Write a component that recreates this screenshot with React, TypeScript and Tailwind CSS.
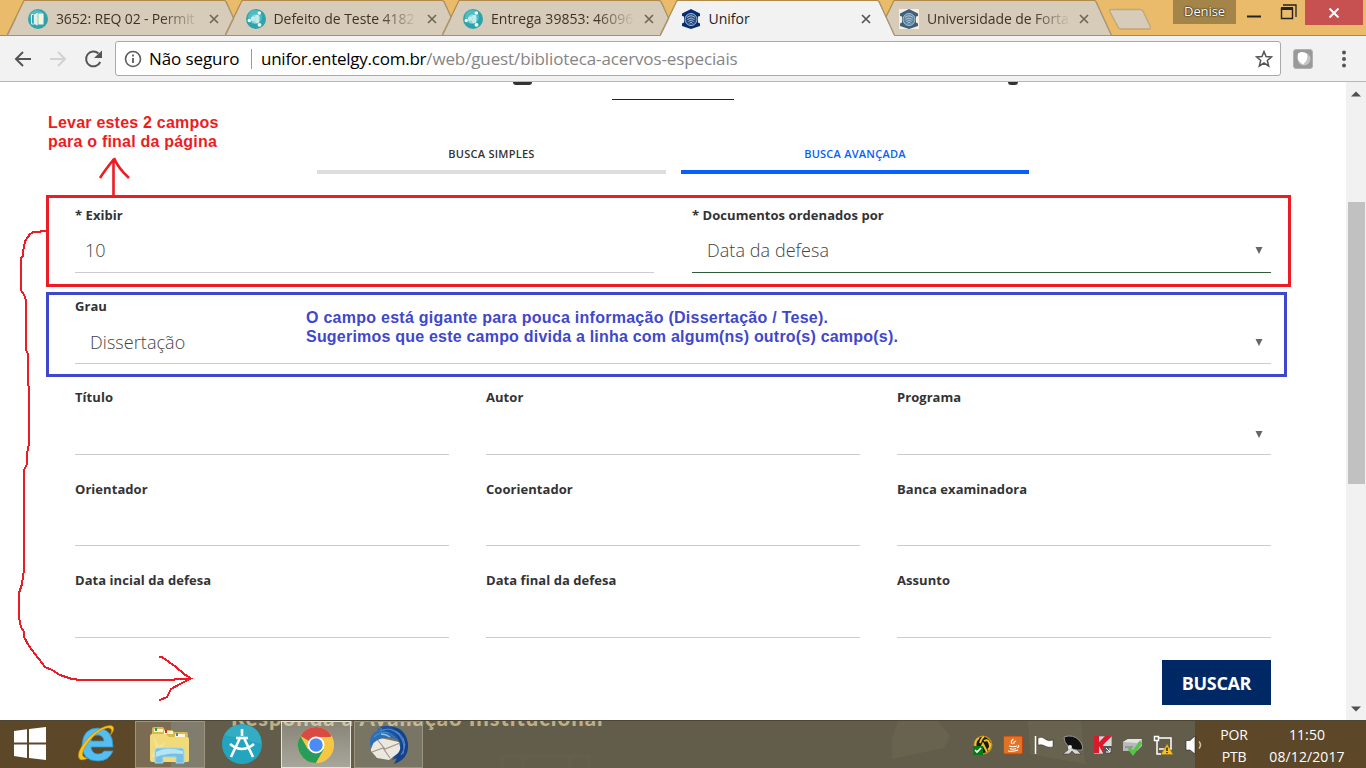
import React from "react";

const ui = "font-['Open_Sans','Noto_Sans',sans-serif]";

function SphereIcon({ door = false }: { door?: boolean }) {
  return (
    <svg width="20" height="20" viewBox="0 0 20 20" className="shrink-0">
      <circle cx="10" cy="10" r="10" fill="#2fa3ad" />
      <circle cx="9" cy="8" r="7" fill="#4dbcc3" />
      {door ? (
        <>
          <path d="M3.500 5.500H7V15H3.500z" fill="#2fa3ad" stroke="#e9f6f2" strokeWidth="1" />
          <path d="M10 4.500h5.500v11H10z" fill="#f8f5dc" />
          <path d="M5.500 5.500 10 3v14l-4.500-2z" fill="#dff0ea" stroke="#2fa3ad" strokeWidth=".500" />
        </>
      ) : (
        <>
          <circle cx="9.500" cy="10" r="4.600" fill="#8fd6d9" />
          <circle cx="7.200" cy="9.800" r="2.300" fill="#c4ebeb" />
          <circle cx="11.200" cy="12" r="2.200" fill="#c4ebeb" />
          <circle cx="11.200" cy="8" r="2.200" fill="#c4ebeb" />
          <circle cx="13.300" cy="4" r="1.800" fill="#f4fbf8" />
          <circle cx="3.300" cy="11.500" r="1.700" fill="#f4fbf8" />
          <circle cx="13.500" cy="15.800" r="1.900" fill="#f4fbf8" />
        </>
      )}
    </svg>
  );
}

function CrestIcon({ boxed = false }: { boxed?: boolean }) {
  const dark = boxed ? "#3d617c" : "#052f70";
  return (
    <svg width="20" height="20" viewBox="0 0 20 20" className="shrink-0">
      {boxed && <rect width="20" height="20" fill="#f8eedb" />}
      <path d="M10 0 19 4.500V7l-2 .500v6l2 1v2.500L10 20l-9-3v-2.500l2-1v-6L1 7V4.500z" fill={dark} />
      <circle cx="10" cy="10.500" r="6" fill={boxed ? "#5c86a0" : "#284f86"} stroke="#b9c9da" strokeWidth=".900" />
      <path d="M6 8.500q4-3.500 8 0M6.500 10.500q3.500-3 7 0M7.500 12.500q2.500-3 5 0M8.500 14.500q1.500-3 3 0" stroke="#c3d0e0" strokeWidth=".800" fill="none" />
    </svg>
  );
}

type TabProps = { title: string; icon: React.ReactNode; active?: boolean; pad: string; track: string; first?: boolean };

function BrowserTab({ title, icon, active, pad, track, first }: TabProps) {
  return (
    <div className={`relative h-9 w-[235px] shrink-0 ${first ? "" : "-ml-[17.5px]"} ${active ? "z-10" : ""}`}>
      <svg className="absolute inset-0" width="235" height="36" viewBox="0 0 235 36">
        <path d="M0 35.500 16 2.500Q16.500.500 18 .500H217Q218.500.500 219.500 2.500L234.500 35.500" fill={active ? "#f2f2f2" : "#d6ccb9"} stroke="#b18b47" strokeWidth="1.200" />
        <path d="M218.500 1 234.500 35M.500 35.500 9 18" stroke="#a49a88" strokeWidth="1" fill="none" />
        <path d={active ? "M1 35.500H234" : "M0 35.500H235"} stroke={active ? "#f2f2f2" : "#a7916b"} strokeWidth="1.200" />
      </svg>
      <div className={`relative flex h-[37px] items-center ${pad}`}>
        {icon}
        <span className={`ml-2 w-[144px] overflow-hidden whitespace-nowrap text-[14px] leading-5 ${track} ${active ? "text-[#1d1d1d]" : "text-[#3d3425] mask-r-from-[105px] mask-r-to-[144px]"}`}>{title}</span>
        <svg width="10" height="10" viewBox="0 0 10 10" className={`absolute top-[14px] ${active ? "left-[201px]" : "left-[202px]"}`}>
          <path d="M1 1 9 9M9 1 1 9" stroke={active ? "#555" : "#706857"} strokeWidth="1.700" />
        </svg>
      </div>
    </div>
  );
}

function TitleBar() {
  return (
    <div className="flex h-9 border-b border-[#a6884f] bg-[#e9bb6a] pl-[7px]">
      <BrowserTab first title="3652: REQ 02 - Permit" icon={<SphereIcon door />} pad="pl-[21px]" track="tracking-[-0.150px]" />
      <BrowserTab title="Defeito de Teste 4182" icon={<SphereIcon />} pad="pl-[21px]" track="tracking-[-0.050px]" />
      <BrowserTab title="Entrega 39853: 46096" icon={<SphereIcon />} pad="pl-[21px]" track="tracking-[0.050px]" />
      <BrowserTab active title="Unifor" icon={<CrestIcon />} pad="pl-[21px]" track="tracking-[0px]" />
      <BrowserTab title="Universidade de Forta" icon={<CrestIcon boxed />} pad="pl-[22px]" track="tracking-[-0.100px]" />
      <svg width="44" height="22" viewBox="0 0 44 22" className="mt-[8px] -ml-[4px] shrink-0">
        <path d="M3 1.500H32Q34 1.500 35 3L42 18Q43 21 41 21H13Q11 21 10 19L2 4Q1 1.500 3 1.500Z" fill="#d6ccb9" stroke="#c2a777" strokeWidth="1.400" />
      </svg>
      <div className="ml-[21px] flex h-6 w-[63px] shrink-0 items-center justify-center bg-[#a48549] text-[13px] tracking-[-0.100px] text-white [text-shadow:0_0_2px_#000,0_0_1px_#333]">Denise</div>
      <svg width="70" height="30" viewBox="0 0 70 30" className="shrink-0">
        <path d="M11 16.500h14" stroke="#242424" strokeWidth="2" />
        <path d="M45.500 8v10.500h11V8" stroke="#242424" strokeWidth="1.400" fill="none" />
        <path d="M45 8.500h12" stroke="#242424" strokeWidth="3" />
        <path d="M47 5h13V17" stroke="#242424" strokeWidth="1.300" fill="none" />
      </svg>
      <div className="-ml-px flex h-[25px] w-[58px] shrink-0 items-center justify-center bg-[#c75050]">
        <svg width="12" height="10" viewBox="0 0 12 10"><path d="M1.500.500 10.500 9.500M10.500.500 1.500 9.500" stroke="#fff" strokeWidth="2" /></svg>
      </div>
    </div>
  );
}

function Toolbar() {
  return (
    <div className="flex h-[46px] items-center border-b border-[#b6b6b6] bg-[#f2f2f2] pl-[14px]">
      <svg width="88" height="20" viewBox="0 0 88 20" className="shrink-0">
        <path d="M17 10H2M9 3 2 10l7 7" fill="none" stroke="#555" strokeWidth="2" />
        <path d="M36 10h15M44 3l7 7-7 7" fill="none" stroke="#d2d2d2" strokeWidth="2" />
        <path d="M84.500 4.500A7.400 7.400 0 1 0 86.200 13" fill="none" stroke="#555" strokeWidth="2" />
        <path d="M88 1.500V9H80z" fill="#555" />
      </svg>
      <div className="ml-[13px] flex h-[35px] w-[1166px] shrink-0 items-center rounded-[3px] border border-[#a9a9a9] bg-white pl-[8px] text-[17px]">
        <svg width="18" height="18" viewBox="0 0 18 18" className="shrink-0">
          <circle cx="9" cy="9" r="7.500" fill="none" stroke="#5a5a5a" strokeWidth="1.600" />
          <path d="M9 4.500v2M9 8v5" stroke="#5a5a5a" strokeWidth="1.800" />
        </svg>
        <span className="ml-[7px] w-[91px] shrink-0 whitespace-nowrap tracking-[-0.100px] text-black">Não seguro</span>
        <span className="ml-[11px] h-5 w-px shrink-0 bg-[#999]" />
        <span className="ml-[9px] w-[982px] shrink-0 whitespace-nowrap tracking-[-0.120px] text-[#858585]"><span className="tracking-[-0.250px] text-black">unifor.entelgy.com.br</span>/web/guest/biblioteca-acervos-especiais</span>
        <svg width="18" height="18" viewBox="0 0 18 18" className="ml-[12px] shrink-0">
          <path d="m9 1.500 2 5 5.500.400-4.200 3.600 1.400 5.500L9 13l-4.700 3 1.400-5.500L1.500 6.900 7 6.500z" fill="none" stroke="#555" strokeWidth="1.500" />
        </svg>
      </div>
      <svg width="20" height="20" viewBox="0 0 20 20" className="ml-[12px] shrink-0">
        <rect x=".500" y=".500" width="19" height="19" rx="2.500" fill="#999" stroke="#b1b1b1" />
        <circle cx="11" cy="10" r="6.500" fill="#c4c4c4" />
        <path d="M5 4.500Q10 1.500 14 5q1.500 6-4 10.500-7-4-5-11" fill="#fff" />
      </svg>
      <svg width="4" height="18" viewBox="0 0 4 18" className="ml-[29px] shrink-0"><circle cx="2" cy="2.500" r="2" fill="#555" /><circle cx="2" cy="9" r="2" fill="#555" /><circle cx="2" cy="15.500" r="2" fill="#555" /></svg>
    </div>
  );
}

type FieldProps = { label: string; value?: string; select?: boolean; focus?: boolean; low?: boolean; inset?: string };

function Field({ label, value, select, focus, low, inset = "pt-[6px]" }: FieldProps) {
  return (
    <div className={`flex h-[67px] flex-col border-b ${focus ? "border-[#2f5b3a]" : "border-[#ccc]"}`}>
      <label className={`h-[18px] whitespace-nowrap text-[13px] font-bold leading-[18px] tracking-[0.050px] text-[#333] ${low ? "relative top-px" : ""}`}>{label}</label>
      <div className={`flex flex-1 items-center justify-between pr-[8px] text-[18px] ${inset} ${select ? "pl-[15px]" : "pl-[10px]"}`}>
        <span className="font-light tracking-[0.060px] text-[#444]">{value}</span>
        {select && <svg width="8" height="7" viewBox="0 0 8 7" className="mt-px"><path d="M.500 0h7L4 7z" fill="#666" /></svg>}
      </div>
    </div>
  );
}

function SearchForm() {
  return (
    <form className="ml-[75px] w-[1196px] pt-8">
      <div className="grid grid-cols-2 gap-[38px]">
        <Field label="* Exibir" value="10" inset="pt-[4px]" />
        <Field label="* Documentos ordenados por" value="Data da defesa" select focus inset="pt-[4px]" />
      </div>
      <div className="mt-6"><Field label="Grau" value="Dissertação" select /></div>
      <div className="mt-6 grid grid-cols-3 gap-x-[37px]">
        <Field label="Título" /><Field label="Autor" /><Field label="Programa" select inset="pt-[8px]" />
      </div>
      <div className="mt-6 grid grid-cols-3 gap-x-[37px]">
        <Field label="Orientador" low /><Field label="Coorientador" low /><Field label="Banca examinadora" low />
      </div>
      <div className="mt-[25px] grid grid-cols-3 gap-x-[37px]">
        <Field label="Data incial da defesa" /><Field label="Data final da defesa" /><Field label="Assunto" />
      </div>
      <div className="mt-[22px] flex justify-end">
        <button type="button" className="h-[45px] w-[109px] bg-[#002865] pt-[2px] text-[18px] font-bold tracking-[-0.350px] text-white">BUSCAR</button>
      </div>
    </form>
  );
}

function Page() {
  return (
    <div className="flex h-[638px] overflow-hidden">
      <main className="w-[1346px]">
        <div className="flex h-[3px] justify-between pl-[513px] pr-[328px]">
          <span className="h-[3px] w-[19px] rounded-b-full bg-[#333]" />
          <span className="h-[3px] w-[10px] rounded-b-full bg-[#333]" />
        </div>
        <div className="ml-[612px] mt-[14px] h-px w-[122px] bg-[#002865]" />
        <div className="ml-[317px] mt-[44px] flex gap-[15px] text-[11px] font-semibold leading-5 tracking-[0.250px]">
          <div className="h-[30px] w-[349px] border-b-4 border-[#ddd] text-center text-[#333]">BUSCA SIMPLES</div>
          <div className="h-[30px] w-[348px] border-b-4 border-[#0560fd] text-center text-[#0560fd]">BUSCA AVANÇADA</div>
        </div>
        <SearchForm />
      </main>
      <div className="flex w-5 flex-col items-center justify-between bg-[#f1f1f1] pt-[9px] pb-[8px]">
        <svg width="10" height="6" viewBox="0 0 10 6"><path d="M0 5.500 5 .500l5 5z" fill="#505050" /></svg>
        <div className="-mt-[117px] h-[282px] w-[17px] bg-[#c1c1c1]" />
        <svg width="10" height="6" viewBox="0 0 10 6"><path d="M0 .500h10l-5 5z" fill="#505050" /></svg>
      </div>
    </div>
  );
}

function Annotations() {
  return (
    <div className="pointer-events-none absolute inset-0 z-20 font-['Liberation_Sans',Arial,sans-serif] text-[16px] font-bold leading-[19px] tracking-[0.210px]">
      <div className="absolute left-[46px] top-[195px] h-[92px] w-[1245px] border-3 border-[#ed1c24]" />
      <div className="absolute left-[46px] top-[292px] h-[85px] w-[1241px] border-3 border-[#3f48cc]" />
      <p className="absolute left-[48px] top-[113px] whitespace-nowrap text-[#ed1c24]">Levar estes 2 campos<br />para o final da página</p>
      <p className="absolute left-[306px] top-[308px] whitespace-nowrap text-[#3f48cc]"><span className="tracking-[0.260px]">O campo está gigante para pouca informação (Dissertação / Tese).</span><br />Sugerimos que este campo divida a linha com algum(ns) outro(s) campo(s).</p>
      <svg width="1366" height="768" viewBox="0 0 1366 768" className="absolute inset-0" fill="none" stroke="#ed1c24">
        <path d="M113.500 196V159M100 178q5-8 14-19M114 158q4 10 15 20" strokeWidth="2.600" />
        <path d="M47 230.500H42L40 232H34Q30 233 28 237L25 241 23 252V256L21 258V290L24 295 26 300V350L28 354V380L29 392V444L27 453V464L24 470V570L22 584 19 593V618L21 627 24 632V637L29 646 45 667 52 670 60 675 72 679 81 680H171L178 679H191M159 657H162L176 667 184 674 191 678.500 180 684 171 689 167 697 159 700.500" strokeWidth="2" shapeRendering="crispEdges" />
      </svg>
    </div>
  );
}

function ExplorerIcon() {
  return (
    <svg width="42" height="38" viewBox="0 0 42 38">
      <path d="M3 3Q3 1 5 1H14L16 4H23L25 6H37Q39 6 39 8V35H2z" fill="#d8b950" />
      <path d="M5 3h9v3H5zM15 5h9v3h-9zM26 8h10v3H26z" fill="#fff6d8" />
      <path d="M6 2h2v3H6z" fill="#2d9d4c" /><path d="M16 4h2v3h-2z" fill="#d52d20" /><path d="M27 7h2v3h-2z" fill="#3a8ad0" />
      <path d="M1 10Q1 8 3 8H17L20 11H38Q40 11 40 13V35Q40 36 38 36H3Q1 36 1 34z" fill="#f0da79" />
      <path d="M2 31 7 22 4 10 10 20 18 15 11 24 15 33z" fill="#fff" opacity=".250" />
      <path d="M6 37V25Q6 22 9 22H32Q35 22 35 25V37H27V31H14V37z" fill="#77bfe0" stroke="#9bdcf1" />
      <path d="M7 26Q18 20 34 25V28Q20 26 7 31z" fill="#b7e4f2" />
    </svg>
  );
}

function IEIcon() {
  return (
    <svg width="42" height="42" viewBox="0 0 42 42">
      <path fillRule="evenodd" d="M37 25H15q1 7 7 7 4 0 6-3h9Q33 39 22 39 6 39 6 23 7 6 22 6q15 1 15 19M15 19h13q-1-6-6.500-6t-6.500 6" fill="#55bdf0" stroke="#2a94d0" strokeWidth=".800" />
      <path d="M34 14Q41 5 35 3.500 26 3 13 15-2 32 4 37.500 7 39 12 36 3 36 9 25 19 9 31 6q7-1 3 8" fill="#f8c51c" stroke="#b7850b" strokeWidth=".600" />
    </svg>
  );
}

function ThunderbirdIcon() {
  return (
    <svg width="40" height="40" viewBox="0 0 40 40">
      <path d="M13 3Q8 2 16 1 34 0 38 15q3 16-11 23l2-6q-7 2-10-1 13-7 10-17L12 9z" fill="#1c4f9c" />
      <path d="M2 18 7 12 30 17 32 26 20 35 8 33 2 26z" fill="#ece7df" />
      <path d="M7 13 16 24 31 18M3 27 14 23 21 33" fill="none" stroke="#9e968b" strokeWidth="1.100" />
      <path d="M1 20Q0 9 9 5L8 2 17 6Q25 8 29 15 20 11 11 14 4 16 2 24z" fill="#2d6fb4" />
      <path d="M28 10Q36 21 27 31L23 35 28 33 25 39Q40 34 39 19 37 4 23 2z" fill="#17428a" />
      <path d="M11 6q11-5 19 4 7 8 4 19M18 4q15 1 18 16M34 13q4 9-2 17M5 12q6-6 15-4" stroke="#4789cc" strokeWidth="1.100" fill="none" />
      <path d="M12 9q5 0 9 3" stroke="#8cc5e9" strokeWidth="1.500" fill="none" />
    </svg>
  );
}

function TrayIcons() {
  return (
    <svg width="236" height="30" viewBox="0 0 236 30" className="absolute left-[970px] top-[9px]">
      <circle cx="13" cy="15" r="8.700" fill="#1b1a12" stroke="#b88922" strokeWidth="1.500" />
      <path d="M6 18q-2-7 3-10M10 13q2-6 4-6M14 11q5-3 6 5M9 22l4-8 4 8M18 20q3-3 2-7" stroke="#f1be31" strokeWidth="2" fill="none" />
      <path d="M3 16h10v9H3z" fill="#087b11" /><path d="m5 20 2 2 4-4" stroke="#fff" strokeWidth="1.700" fill="none" />
      <rect x="33.500" y="6" width="19" height="18" rx="1.500" fill="#e27325" stroke="#bd4310" />
      <path d="M43.500 9q-4 3-1 5M46 11q-3 1-2 3M39 16q4 1.500 8 0M40 18.500q3 1.500 6 0M38 21q5 1 10-1M48 15q2 1-1 3" fill="none" stroke="#fff" strokeWidth="1.100" />
      <path d="M68 8q4-2 7 1 3 3 8 1v7q-5 1-8-1-3-2-7-1z" fill="#fff" stroke="#242424" strokeWidth=".500" /><path d="M65.500 6v18" stroke="#fff" strokeWidth="1.500" />
      <path d="M97 9l1 11-5 4h6l3-3 3 3h6l-5-5z" fill="#d6d6d6" stroke="#333" strokeWidth=".500" />
      <path d="M94 7q0 5 4 9 5 5 14 4 2-4-3-10-6-6-15-3z" fill="#111" stroke="#aaa" strokeWidth=".800" /><circle cx="100" cy="17" r="2" fill="#e7e7e7" />
      <path d="M124.500 6.500h17v17h-17z" fill="#d8d8d8" stroke="#aaa" /><path d="M124 6h5v6l6-6h7l-9 9 4 8h-4l-4-7v7h-5z" fill="#d81b2b" /><path d="M133 16h9v8h-9z" fill="#555" /><path d="m136 18 4 4m0-4v4h-4" stroke="#fff" fill="none" />
      <path d="M153 12 158 9h14v7l-5 5h-14z" fill="#b8b8ba" /><path d="m153 12 5-3h14l-5 4z" fill="#e2e2e2" /><path d="M155 17h8" stroke="#777" /><path d="m159 18 4 5 8-11" fill="none" stroke="#54c644" strokeWidth="3.500" />
      <path d="M189 8h12v11h-12M187 11v13h4M184.500 6.500h4v4h-4z" fill="none" stroke="#fff" strokeWidth="1.500" />
      <path d="M197 14 203 24.500h-12z" fill="#ffbf19" stroke="#99751c" strokeWidth=".500" /><path d="M197 17.500v3.500M197 22v1.200" stroke="#332800" strokeWidth="1.500" />
      <path d="M216 10.500h4L225 6v18l-5-4h-4z" fill="#fff" stroke="#222" strokeWidth=".600" /><path d="M229 11.500q3 3.500 0 7" fill="none" stroke="#c9c1af" strokeWidth="1.500" />
    </svg>
  );
}

function Taskbar() {
  return (
    <footer className="relative flex h-12 overflow-hidden border-t border-[#4c4633] bg-[linear-gradient(90deg,#5c4728_0_171px,#615d4a_171px_1195px,#5c4728_1195px)]">
      <svg width="1366" height="48" className="absolute inset-0" viewBox="0 0 1366 48">
        <path d="M892 38V18L898 0H938L950 15 944 27zM1028 0h53l4 43-55-10z" fill="#716a54" opacity=".450" />
        <path d="M502 48V35h87v13M523 35v13M570 35v13" fill="none" stroke="#6c6855" strokeWidth="4" opacity=".250" />
      </svg>
      <div className="absolute left-[231px] -top-[18px] whitespace-nowrap font-[Lato,sans-serif] text-[22px] font-black leading-[30px] tracking-[0.980px] text-[#bfae86]">Responda a Avaliação Institucional</div>
      <svg width="34" height="34" viewBox="0 0 34 34" className="absolute left-[13px] top-[6px]"><path d="M1 4 14 2.300v13.200H1zM16 2 33 0v15.500H16zM1 17.500h13V31L1 29zM16 17.500h17V33l-17-2z" fill="#fff" /></svg>
      <div className="absolute left-[76px] top-[1px]"><IEIcon /></div>
      <div className="absolute left-[135px] top-0 flex h-[47px] w-[70px] items-center justify-center border border-[#9b9480] bg-white/20"><ExplorerIcon /></div>
      <svg width="40" height="40" viewBox="0 0 40 40" className="absolute left-[222px] top-[3px]">
        <circle cx="20" cy="20" r="20" fill="#23a4bf" /><path d="M2 11Q10-2 25 1 40 5 39 20 23 15 2 11" fill="#43b4ca" opacity=".500" />
        <path d="M20 5v7M14 14h12M18 14 9 33M22 14l9 19M8 20q12 10 24 0" fill="none" stroke="#fff" strokeWidth="2.600" />
      </svg>
      <div className="absolute left-[281px] top-0 flex h-[47px] w-[70px] items-center justify-center border border-[#e7e4dd] bg-linear-to-b from-white/25 to-white/45">
        <svg width="38" height="38" viewBox="0 0 38 38">
          <circle cx="19" cy="19" r="18" fill="#f7c744" />
          <path d="M19 19 3.400 10A18 18 0 0 1 34.600 10z" fill="#d94b42" />
          <path d="M3.400 10A18 18 0 0 0 19 37L27 23.500 19 19 11 23.500z" fill="#299c5b" />
          <path d="M19 11H35.100A18 18 0 0 1 19 37L27 23z" fill="#f7c744" />
          <circle cx="19" cy="19" r="8.500" fill="#fff" /><circle cx="19" cy="19" r="6.700" fill="#4b8bf5" />
        </svg>
      </div>
      <div className="absolute left-[354px] top-0 flex h-[47px] w-[69px] items-center justify-center border border-[#9b9480] bg-white/15"><ThunderbirdIcon /></div>
      <TrayIcons />
      <div className="relative ml-auto flex pr-[20px] text-center text-[14px] leading-[22px] text-white">
        <div className="w-[50px] pt-[3px] tracking-[-0.200px]">POR<br />PTB</div>
        <div className="ml-[9px] w-[78px] pt-[3px] tracking-[0.100px]">11:50<br />08/12/2017</div>
      </div>
    </footer>
  );
}

export default function App() {
  return (
    <div className={`relative h-[768px] w-[1366px] overflow-hidden bg-white ${ui}`}>
      <TitleBar />
      <Toolbar />
      <Page />
      <Taskbar />
      <Annotations />
    </div>
  );
}
